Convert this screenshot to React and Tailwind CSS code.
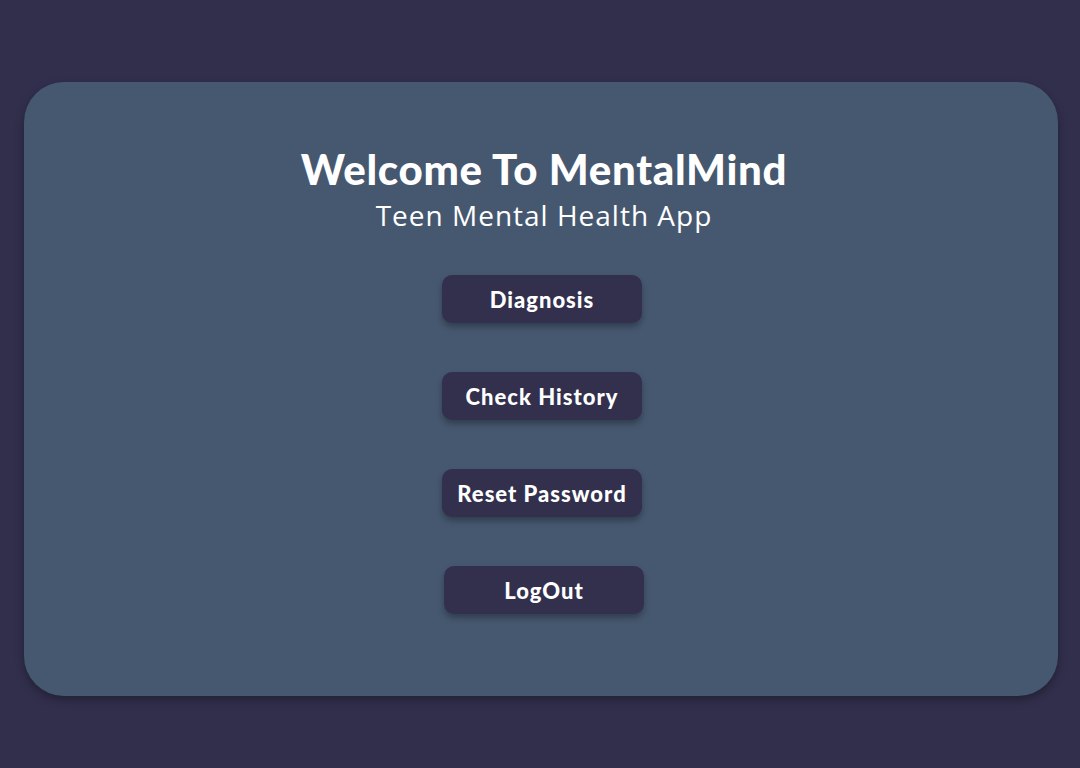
export default function App() {
  const buttons = ['Diagnosis', 'Check History', 'Reset Password', 'LogOut'];

  return (
    <div
      className="min-h-screen w-full bg-[#312f4c] pl-6 pt-[82px]"
      style={{ fontFamily: 'Lato, "Noto Sans", sans-serif' }}
    >
      <div className="flex h-[614px] w-[1034px] flex-col items-center rounded-[40px] bg-[#465870] pt-[62px] shadow-[0_4px_10px_rgba(0,0,0,0.3)]">
        <h1 className="ml-[6px] text-[42px] font-black leading-[50px] tracking-[0.7px] text-white">
          Welcome To MentalMind
        </h1>
        <p
          className="ml-[6px] mt-[3px] text-[28px] leading-[36px] tracking-[1px] text-white"
          style={{ fontFamily: '"Open Sans", sans-serif' }}
        >
          Teen Mental Health App
        </p>
        <div className="ml-[2px] mt-[42px] flex flex-col items-center gap-[49px]">
          {buttons.map((label) => (
            <button
              key={label}
              className={`h-12 w-[200px] rounded-[10px] bg-[#33304e] text-[22px] font-black tracking-[1px] text-white shadow-[0_4px_6px_rgba(0,0,0,0.3)] ${
                label === 'LogOut' ? 'ml-[4px]' : ''
              }`}
            >
              {label}
            </button>
          ))}
        </div>
      </div>
    </div>
  );
}
